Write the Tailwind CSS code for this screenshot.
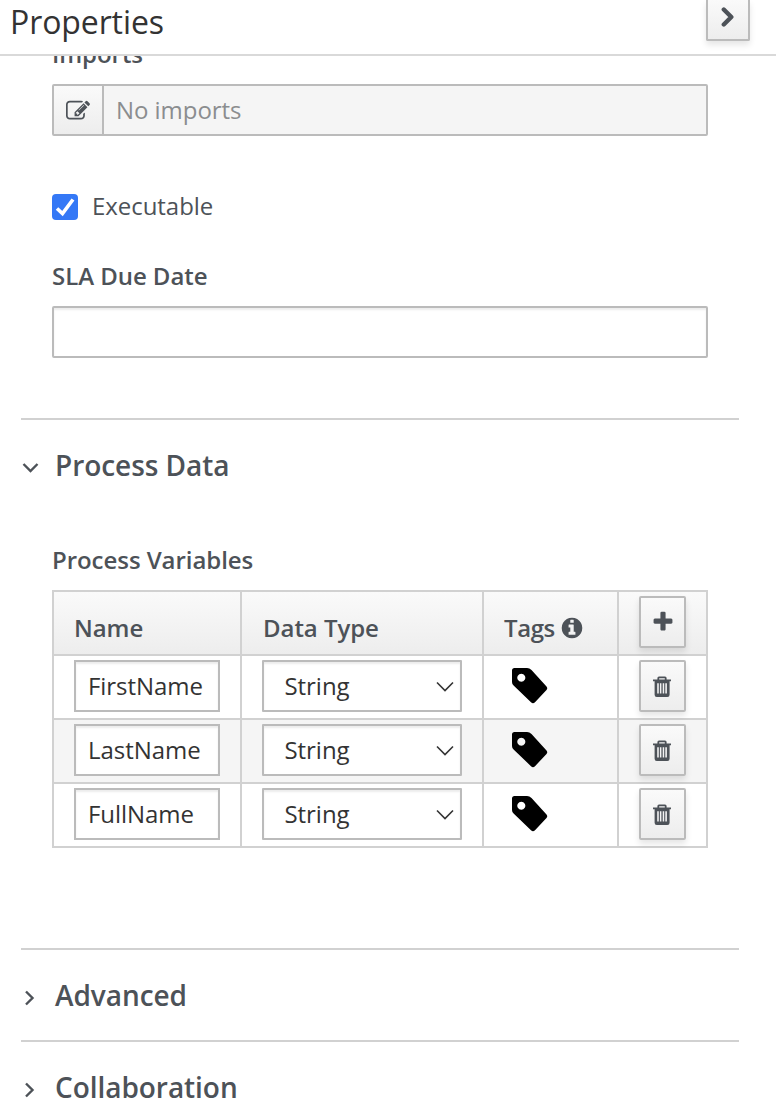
<!DOCTYPE html>
<html lang="en">
<head>
<meta charset="utf-8">
<title>Properties</title>
<script src="https://cdn.jsdelivr.net/npm/@tailwindcss/browser@4"></script>
</head>
<body class="h-[1118px] overflow-hidden bg-white font-['Open_Sans',sans-serif] text-2xl tracking-[-0.05px] text-[#4d5258]">
<svg class="hidden">
  <symbol id="trash" viewBox="0 0 18 22"><path fill-rule="evenodd" d="M6 0.5h6q1.6 0 1.6 1.6V3.5H18V5.3H16.6V18.8q0 2.2-2.2 2.2H3.8q-2.2 0-2.2-2.2V5.3H0V3.5H4.4V2.1Q4.4.5 6 .5zM6.2 2.2V3.5h5.6V2.2zM4.2 7.3V17.6H5.8V7.3zM6.9 7.3V17.6H8.4V7.3zM9.7 7.3V17.6h1.5V7.3zM12.3 7.3V17.6h1.6V7.3z"/></symbol>
  <symbol id="tag" viewBox="0 0 36 36"><path fill-rule="evenodd" d="M2.5 0H15q2.5 0 4.500 2L34.500 18.500q1.500 1.800 0 3.500L23 34.200q-2 2-4 0L1.600 17.500Q0 16 0 14V2.500Q0 0 2.500 0zM9.300 5.700a4 4 0 1 0 .01 0z"/></symbol>
  <symbol id="down" viewBox="0 0 18 12"><path d="M1 1.500l8 8 8-8" fill="none" stroke="#333" stroke-width="1.600"/></symbol>
</svg>
<header class="flex h-14 justify-between border-b-2 border-[#d9d9d9] pl-2.5 pr-[26px]">
  <h1 class="text-[32px] leading-[44px] tracking-[-0.1px] text-[#333]">Properties</h1>
  <button class="flex h-[41px] w-11 items-center justify-center rounded-b-[2px] border-2 border-t-0 border-[#bbb] bg-linear-to-b from-[#fafafa] to-[#ededed] pb-[5px] shadow-[0_4px_6px_rgba(3,3,3,0.1)]"><svg class="h-5 w-3.5" viewBox="0 0 14 20"><path d="M2.800 2.500l7.500 7.500-7.500 7.500" fill="none" stroke="#4d5258" stroke-width="4.400" stroke-linejoin="round" stroke-linecap="round"/></svg></button>
</header>
<main>
  <section class="h-[362px] overflow-hidden px-[52px]">
    <div class="-mt-[19px] h-[47px] font-semibold leading-[34px]">Imports</div>
    <div class="flex h-[52px] w-[656px] rounded-[2px] border-2 border-[#bbb] bg-[#f5f5f5]">
      <div class="flex w-[50px] items-center justify-center border-r-2 border-[#bbb] bg-linear-to-b from-[#fafafa] to-[#ededed] pt-px"><svg class="h-6 w-6" viewBox="0 0 1792 1792" fill="#4d5258"><path d="M888 1184l116-116-152-152-116 116v56h96v96h56zm440-720q-16-16-33 1l-350 350q-17 17-1 33t33-1l350-350q17-17 1-33zm80 594v190q0 119-84.500 203.500t-203.500 84.500h-832q-119 0-203.500-84.500t-84.500-203.500v-832q0-119 84.500-203.500t203.500-84.500h832q63 0 117 25 15 7 18 23 3 17-9 29l-49 49q-14 14-32 8-23-6-45-6h-832q-66 0-113 47t-47 113v832q0 66 47 113t113 47h832q66 0 113-47t47-113v-126q0-13 9-22l64-64q15-15 35-7t20 29zm-96-738l288 288-672 672h-288v-288zm444 132l-92 92-288-288 92-92q28-28 68-28t68 28l152 152q28 28 28 68t-28 68z"/></svg></div>
      <div class="pl-3 leading-[48px] text-[#8b8d8f]">No imports</div>
    </div>
    <label class="mt-[54px] flex h-[34px] items-center gap-3.5"><span class="flex h-[26px] w-[26px] items-center justify-center rounded-[4px] bg-[#3478f6]"><svg class="h-[26px] w-[26px]" viewBox="0 0 26 26"><path d="M5 14.500l5.500 5L21 5.500" fill="none" stroke="#fff" stroke-width="3.600"/></svg></span><span class="pb-0.5">Executable</span></label>
    <div class="mt-[35px] h-[47px] font-semibold leading-[34px]">SLA Due Date</div>
    <div class="h-[52px] w-[656px] rounded-[2px] border-2 border-[#bbb] shadow-[inset_0_2px_2px_rgba(3,3,3,0.075)]"></div>
  </section>
  <section class="ml-[21px] h-[530px] w-[718px] border-t-2 border-[#d1d1d1]">
    <h2 class="flex h-[92px] items-center text-[28px] font-semibold"><svg class="mr-4 mt-1 h-3 w-[18px]" viewBox="0 0 18 12"><path d="M2.500 2l7 7 7-7" fill="none" stroke="#4d5258" stroke-width="2.400"/></svg>Process Data</h2>
    <div class="ml-[31px] mt-[31px] h-[47px] font-semibold leading-[34px]">Process Variables</div>
    <div class="ml-[31px] w-[656px] border-2 border-b-0 border-[#d1d1d1] text-[#333]">
      <div class="grid h-16 grid-cols-[188px_242px_135px_87px] border-b-2 border-[#d1d1d1] bg-linear-to-b from-[#fafafa] to-[#ededed] font-semibold leading-[72px] text-[#4d5258]">
        <div class="border-r-2 border-[#d1d1d1] pl-5">Name</div>
        <div class="border-r-2 border-[#d1d1d1] pl-[21px]">Data Type</div>
        <div class="flex items-center border-r-2 border-[#d1d1d1] pl-5"><span class="tracking-[-0.4px]">Tags</span><svg class="ml-[5px] h-6 w-6" viewBox="0 0 1792 1792" fill="#4d5258"><path d="M1152 1376v-160q0-14-9-23t-23-9h-96v-512q0-14-9-23t-23-9h-320q-14 0-23 9t-9 23v160q0 14 9 23t23 9h96v320h-96q-14 0-23 9t-9 23v160q0 14 9 23t23 9h448q14 0 23-9t9-23zm-128-896v-160q0-14-9-23t-23-9h-192q-14 0-23 9t-9 23v160q0 14 9 23t23 9h192q14 0 23-9t9-23zm640 416q0 209-103 385.500t-279.500 279.500-385.500 103-385.500-103-279.500-279.500-103-385.500 103-385.500 279.500-279.500 385.500-103 385.500 103 279.500 279.500 103 385.500z"/></svg></div>
        <div class="pl-5 pt-1"><button class="flex h-[52px] w-[47px] items-center justify-center rounded-[2px] border-2 border-[#bbb] bg-linear-to-b from-[#fafafa] to-[#ededed] shadow-[0_4px_6px_rgba(3,3,3,0.1)]"><svg class="h-6 w-6" viewBox="0 0 1792 1792" fill="#4d5258"><path d="M1600 736v192q0 40-28 68t-68 28h-416v416q0 40-28 68t-68 28h-192q-40 0-68-28t-28-68v-416h-416q-40 0-68-28t-28-68v-192q0-40 28-68t68-28h416v-416q0-40 28-68t68-28h192q40 0 68 28t28 68v416h416q40 0 68 28t28 68z"/></svg></button></div>
      </div>
      <div class="grid h-16 grid-cols-[188px_242px_135px_87px] border-b-2 border-[#d1d1d1]">
        <div class="border-r-2 border-[#d1d1d1] pl-5 pt-1"><div class="h-[52px] w-[146px] border-2 border-[#bbb] bg-white pl-3 leading-[48px] shadow-[inset_0_2px_2px_rgba(3,3,3,0.075)]">FirstName</div></div>
        <div class="border-r-2 border-[#d1d1d1] pl-5 pt-1"><div class="flex h-[52px] w-[200px] items-center justify-between rounded-[1px] border-2 border-[#bbb] bg-white pl-[20.5px] pr-1.5 shadow-[inset_0_2px_2px_rgba(3,3,3,0.075)]">String<svg class="mt-0.5 h-3 w-[18px]"><use href="#down"/></svg></div></div>
        <div class="border-r-2 border-[#d1d1d1] pl-7 pt-3"><svg class="h-9 w-9 text-black" fill="currentColor"><use href="#tag"/></svg></div>
        <div class="pl-5 pt-1"><button class="flex h-[52px] w-[47px] items-center justify-center rounded-[2px] border-2 border-[#bbb] bg-linear-to-b from-[#fafafa] to-[#ededed] pr-px pt-0.5 shadow-[0_4px_6px_rgba(3,3,3,0.1)]"><svg class="h-[22px] w-[18px]" fill="#4d5258"><use href="#trash"/></svg></button></div>
      </div>
      <div class="grid h-16 grid-cols-[188px_242px_135px_87px] border-b-2 border-[#d1d1d1] bg-[#f5f5f5]">
        <div class="border-r-2 border-[#d1d1d1] pl-5 pt-1"><div class="h-[52px] w-[146px] border-2 border-[#bbb] bg-white pl-3 leading-[48px] shadow-[inset_0_2px_2px_rgba(3,3,3,0.075)]">LastName</div></div>
        <div class="border-r-2 border-[#d1d1d1] pl-5 pt-1"><div class="flex h-[52px] w-[200px] items-center justify-between rounded-[1px] border-2 border-[#bbb] bg-white pl-[20.5px] pr-1.5 shadow-[inset_0_2px_2px_rgba(3,3,3,0.075)]">String<svg class="mt-0.5 h-3 w-[18px]"><use href="#down"/></svg></div></div>
        <div class="border-r-2 border-[#d1d1d1] pl-7 pt-3"><svg class="h-9 w-9 text-black" fill="currentColor"><use href="#tag"/></svg></div>
        <div class="pl-5 pt-1"><button class="flex h-[52px] w-[47px] items-center justify-center rounded-[2px] border-2 border-[#bbb] bg-linear-to-b from-[#fafafa] to-[#ededed] pr-px pt-0.5 shadow-[0_4px_6px_rgba(3,3,3,0.1)]"><svg class="h-[22px] w-[18px]" fill="#4d5258"><use href="#trash"/></svg></button></div>
      </div>
      <div class="grid h-16 grid-cols-[188px_242px_135px_87px] border-b-2 border-[#d1d1d1]">
        <div class="border-r-2 border-[#d1d1d1] pl-5 pt-1"><div class="h-[52px] w-[146px] border-2 border-[#bbb] bg-white pl-3 leading-[48px] shadow-[inset_0_2px_2px_rgba(3,3,3,0.075)]">FullName</div></div>
        <div class="border-r-2 border-[#d1d1d1] pl-5 pt-1"><div class="flex h-[52px] w-[200px] items-center justify-between rounded-[1px] border-2 border-[#bbb] bg-white pl-[20.5px] pr-1.5 shadow-[inset_0_2px_2px_rgba(3,3,3,0.075)]">String<svg class="mt-0.5 h-3 w-[18px]"><use href="#down"/></svg></div></div>
        <div class="border-r-2 border-[#d1d1d1] pl-7 pt-3"><svg class="h-9 w-9 text-black" fill="currentColor"><use href="#tag"/></svg></div>
        <div class="pl-5 pt-1"><button class="flex h-[52px] w-[47px] items-center justify-center rounded-[2px] border-2 border-[#bbb] bg-linear-to-b from-[#fafafa] to-[#ededed] pr-px pt-0.5 shadow-[0_4px_6px_rgba(3,3,3,0.1)]"><svg class="h-[22px] w-[18px]" fill="#4d5258"><use href="#trash"/></svg></button></div>
      </div>
    </div>
  </section>
  <section class="ml-[21px] h-[92px] w-[718px] border-t-2 border-[#d1d1d1]">
    <h2 class="flex h-[92px] items-center text-[28px] font-semibold"><svg class="ml-[3px] mr-[19px] mt-[3px] h-[18px] w-3" viewBox="0 0 12 18"><path d="M2 2.500l6.500 6.500L2 15.500" fill="none" stroke="#4d5258" stroke-width="2.400"/></svg>Advanced</h2>
  </section>
  <section class="ml-[21px] h-[78px] w-[718px] border-t-2 border-[#d1d1d1]">
    <h2 class="flex h-[92px] items-center text-[28px] font-semibold"><svg class="ml-[3px] mr-[19px] mt-[3px] h-[18px] w-3" viewBox="0 0 12 18"><path d="M2 2.500l6.500 6.500L2 15.500" fill="none" stroke="#4d5258" stroke-width="2.400"/></svg>Collaboration</h2>
  </section>
</main>
</body>
</html>
